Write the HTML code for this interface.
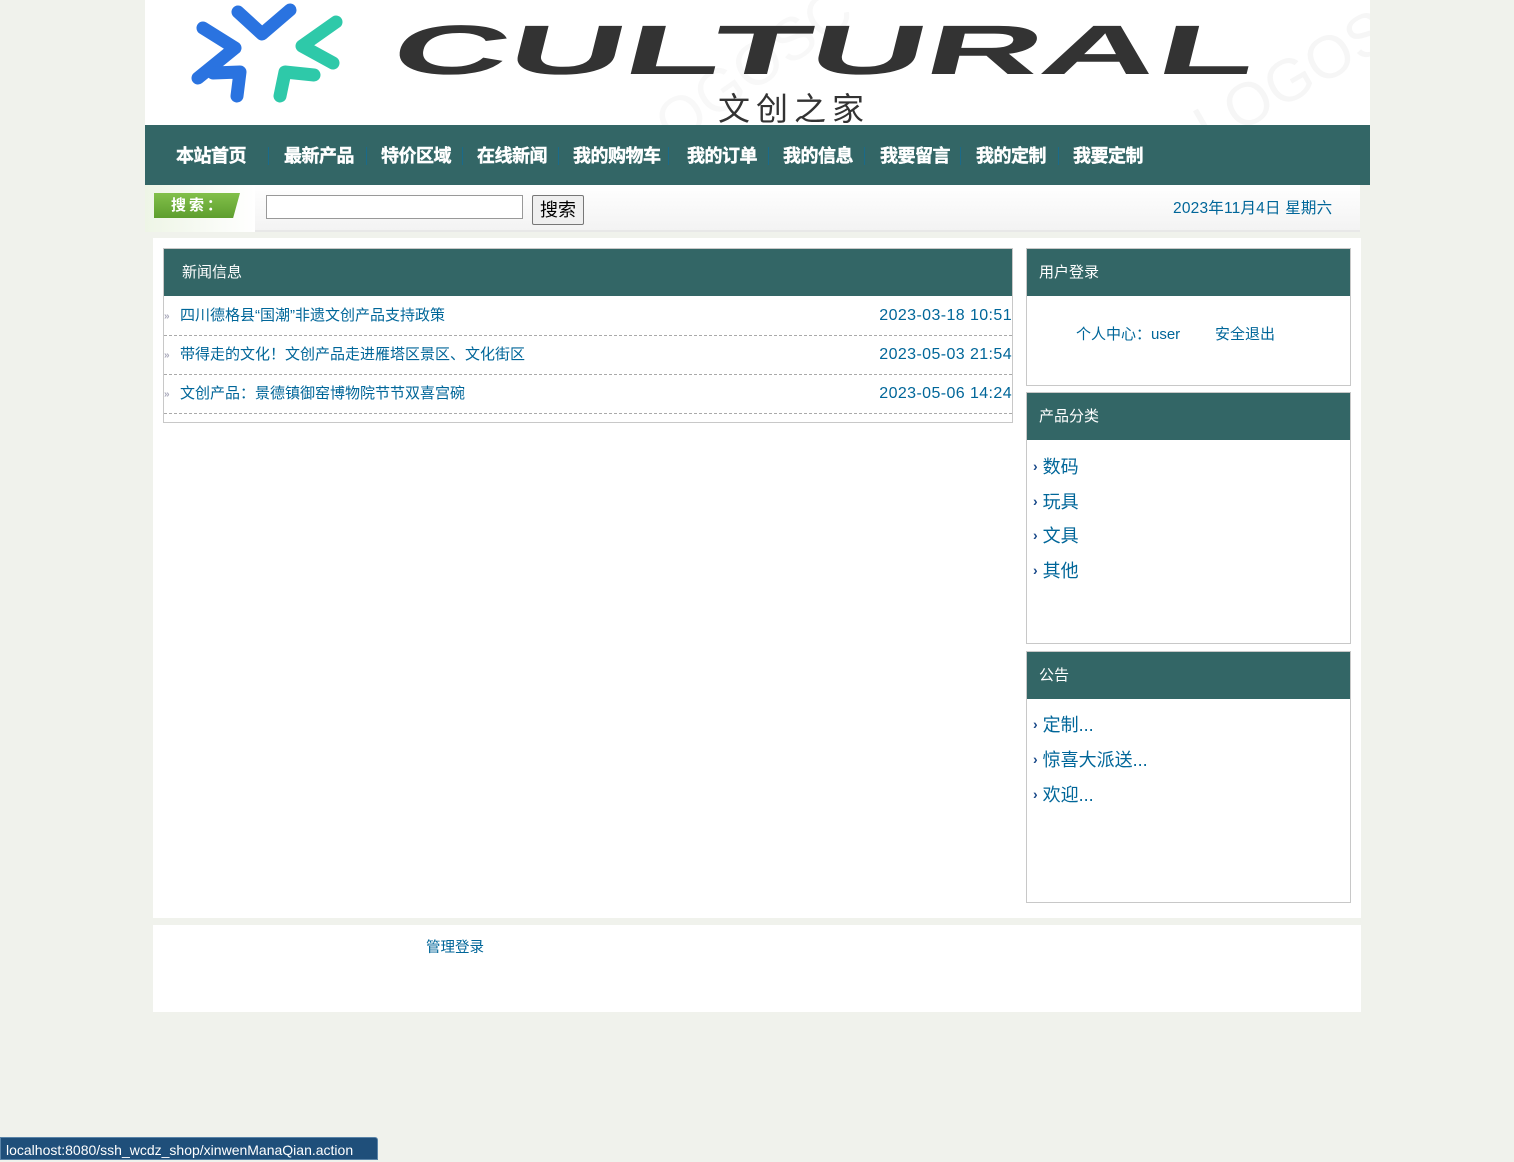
<!DOCTYPE html>
<html><head><meta charset="utf-8"><style>
*{margin:0;padding:0;box-sizing:border-box}
body{width:1514px;height:1160px;background:#f0f2ec;font-family:"Liberation Sans","Noto Sans CJK SC",sans-serif;position:relative;overflow:hidden;color:#006699}
.a{position:absolute}
#hdr{left:145px;top:0;width:1225px;height:125px;background:#fff;overflow:hidden}
#nav{left:145px;top:125px;width:1225px;height:60px;background:#336666}
#nav span{position:absolute;top:20px;color:#fff;font-weight:bold;font-size:18px;line-height:22px;letter-spacing:-0.5px;-webkit-text-stroke:0.4px #fff}
#nav i{position:absolute;top:22px;width:1px;height:18px;background:#1a6a8a}
#srch{left:145px;top:185px;width:1215px;height:47px;background:linear-gradient(#fff,#f3f3f3);border-bottom:2px solid #e8e8e8}
.box{position:absolute;background:#fff;border:1px solid #c8c8c8}
.box .h{height:47px;background:#336666;color:#fff;font-size:15px;line-height:47px;padding-left:12px}
.nl{position:absolute;left:0;width:848px;height:39px;border-bottom:1px dashed #aaa;font-size:15px;line-height:38px}
.nl b{position:absolute;left:0;top:15px;font-weight:bold;font-size:10px;color:#aab;line-height:9px}
.nl .t{position:absolute;left:16px}
.nl .d{position:absolute;right:0;font-size:16px;letter-spacing:0.4px}
.li{position:absolute;left:6px;font-size:18px;line-height:20px}
.li b{font-size:14px;color:#1a4a8a;margin-right:5px;position:relative;top:-2px}
</style></head><body>
<div id="hdr" class="a">
<svg width="1225" height="125" viewBox="145 0 1225 125">
<text x="1180" y="120" font-family="Liberation Sans" font-size="60" fill="#f6f6f6" transform="rotate(-30 1250 80)">LOGOS</text>
<text x="640" y="120" font-family="Liberation Sans" font-size="60" fill="#f8f8f8" transform="rotate(-35 700 80)">OGOSC</text>
<g fill="none" stroke-linecap="round" stroke-linejoin="round" stroke-width="13">
<polyline points="238,12 262,34 290,10" stroke="#2a73e0"/>
<polyline points="203,28 235,48 198,78" stroke="#2a73e0"/>
<polyline points="213,73 240,72 237,96" stroke="#2a73e0"/>
<polyline points="336,22 302,46 333,63" stroke="#2ec9a9"/>
<polyline points="280,96 285,72 314,75" stroke="#2ec9a9"/>
</g>
<text x="388" y="74" font-family="Liberation Sans" font-weight="bold" font-size="70" fill="#333" textLength="864" lengthAdjust="spacingAndGlyphs" transform="skewX(-14) translate(18,0)">CULTURAL</text>
<text x="718" y="120" font-family="Noto Sans CJK SC,sans-serif" font-size="32" fill="#333" letter-spacing="6">文创之家</text>
</svg>
</div>
<div id="nav" class="a">
<span style="left:31px">本站首页</span><i style="left:123px"></i>
<span style="left:139px">最新产品</span><i style="left:221px"></i>
<span style="left:236px">特价区域</span><i style="left:317px"></i>
<span style="left:332px">在线新闻</span><i style="left:413px"></i>
<span style="left:428px">我的购物车</span><i style="left:523px"></i>
<span style="left:542px">我的订单</span><i style="left:623px"></i>
<span style="left:638px">我的信息</span><i style="left:719px"></i>
<span style="left:735px">我要留言</span><i style="left:815px"></i>
<span style="left:831px">我的定制</span><i style="left:913px"></i>
<span style="left:928px">我要定制</span>
</div>
<div id="srch" class="a">
<div class="a" style="left:0;top:0;width:110px;height:47px;background:linear-gradient(90deg,#eef5e6,#fff)"></div>
<div class="a" style="left:9px;top:8px;width:86px;height:25px;background:linear-gradient(#82c04a,#5e9e2e);clip-path:polygon(0 0,100% 0,92% 100%,0 100%);color:#fff;font-weight:bold;font-size:15px;line-height:25px;padding-left:17px;letter-spacing:3px">搜索：</div>
<div class="a" style="left:121px;top:10px;width:257px;height:24px;border:1px solid #999;background:#fff"></div>
<div class="a" style="left:387px;top:10px;width:52px;height:30px;border:1px solid #777;border-radius:2px;background:#efefef;color:#000;font-size:18px;line-height:28px;text-align:center">搜索</div>
<div class="a" style="left:1028px;top:11px;font-size:15.5px;color:#006699;letter-spacing:0.2px">2023年11月4日 星期六</div>
</div>
<div class="a" style="left:153px;top:238px;width:1208px;height:680px;background:#fff"></div>
<div class="box" style="left:163px;top:248px;width:850px;height:175px">
<div class="h" style="padding-left:18px">新闻信息</div>
<div class="nl" style="top:48px"><b>&#187;</b><span class="t">四川德格县“国潮”非遗文创产品支持政策</span><span class="d">2023-03-18 10:51</span></div>
<div class="nl" style="top:87px"><b>&#187;</b><span class="t">带得走的文化！文创产品走进雁塔区景区、文化街区</span><span class="d">2023-05-03 21:54</span></div>
<div class="nl" style="top:126px"><b>&#187;</b><span class="t">文创产品：景德镇御窑博物院节节双喜宫碗</span><span class="d">2023-05-06 14:24</span></div>
</div>
<div class="box" style="left:1026px;top:248px;width:325px;height:138px">
<div class="h">用户登录</div>
<div class="a" style="left:49px;top:74px;font-size:15px">个人中心：user</div>
<div class="a" style="left:188px;top:74px;font-size:15px">安全退出</div>
</div>
<div class="box" style="left:1026px;top:392px;width:325px;height:252px">
<div class="h">产品分类</div>
<div class="li" style="top:64px"><b>&#8250;</b>数码</div>
<div class="li" style="top:99px"><b>&#8250;</b>玩具</div>
<div class="li" style="top:133px"><b>&#8250;</b>文具</div>
<div class="li" style="top:168px"><b>&#8250;</b>其他</div>
</div>
<div class="box" style="left:1026px;top:651px;width:325px;height:252px">
<div class="h">公告</div>
<div class="li" style="top:63px"><b>&#8250;</b>定制...</div>
<div class="li" style="top:98px"><b>&#8250;</b>惊喜大派送...</div>
<div class="li" style="top:133px"><b>&#8250;</b>欢迎...</div>
</div>
<div class="a" style="left:153px;top:925px;width:1208px;height:87px;background:#fff"></div>
<div class="a" style="left:426px;top:936px;font-size:14.5px">管理登录</div>
<div class="a" style="left:0;top:1137px;width:378px;height:23px;background:#1f4f7a;border:1px solid #5a84a8;border-radius:0 3px 0 0;color:#fff;font-size:14px;line-height:24px;padding-left:5px">localhost:8080/ssh_wcdz_shop/xinwenManaQian.action</div>
</body></html>
